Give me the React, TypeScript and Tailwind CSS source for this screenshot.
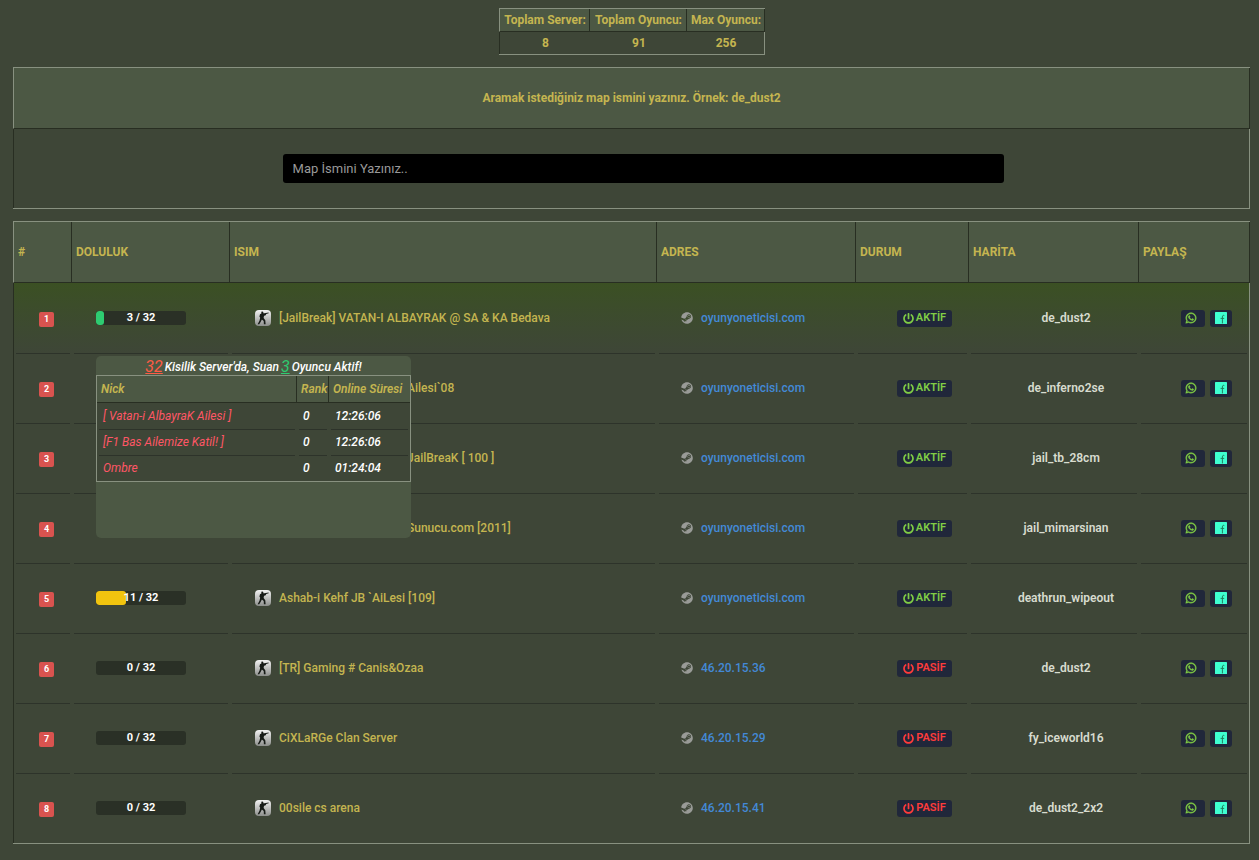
import React from 'react';
import { FaPowerOff, FaSteam, FaWhatsapp } from 'react-icons/fa';

type Server = {
  name: string;
  players?: number;
  max: number;
  address: string;
  active: boolean;
  map: string;
  indented?: boolean;
};

const servers: Server[] = [
  { name: '[JailBreak] VATAN-I ALBAYRAK @ SA & KA Bedava', players: 3, max: 32, address: 'oyunyoneticisi.com', active: true, map: 'de_dust2' },
  { name: 'Ailesi`08', indented: true, max: 32, address: 'oyunyoneticisi.com', active: true, map: 'de_inferno2se' },
  { name: 'JailBreaK [ 100 ]', indented: true, max: 32, address: 'oyunyoneticisi.com', active: true, map: 'jail_tb_28cm' },
  { name: 'Sunucu.com [2011]', indented: true, max: 32, address: 'oyunyoneticisi.com', active: true, map: 'jail_mimarsinan' },
  { name: 'Ashab-i Kehf JB `AiLesi [109]', players: 11, max: 32, address: 'oyunyoneticisi.com', active: true, map: 'deathrun_wipeout' },
  { name: '[TR] Gaming # Canis&Ozaa', players: 0, max: 32, address: '46.20.15.36', active: false, map: 'de_dust2' },
  { name: 'CiXLaRGe Clan Server', players: 0, max: 32, address: '46.20.15.29', active: false, map: 'fy_iceworld16' },
  { name: '00sile cs arena', players: 0, max: 32, address: '46.20.15.41', active: false, map: 'de_dust2_2x2' },
];

const online = [
  { nick: '[ Vatan-i AlbayraK Ailesi ]', rank: 0, time: '12:26:06' },
  { nick: '[F1 Bas Ailemize Katil! ]', rank: 0, time: '12:26:06' },
  { nick: 'Ombre', rank: 0, time: '01:24:04' },
];

const headCell =
  'border-r border-b border-[#282e22] bg-[#4c5844] font-bold text-[#c4b550] first:border-l first:border-l-[#889180]';
const bodyCell =
  'first:border-l first:border-l-[#282e22] last:border-r last:border-r-[#889180]';
const frame = 'border-y border-[#889180]';
const ruleTop =
  'bg-[linear-gradient(#2d332a,#2d332a)] bg-[length:calc(100%-4px)_1px] bg-top bg-no-repeat';

function StrikeIcon() {
  return (
    <svg viewBox="0 0 16 16" className="size-4 shrink-0" aria-hidden="true">
      <defs>
        <linearGradient id="plate" x1="0" y1="0" x2="0" y2="1">
          <stop offset="0" stopColor="#f2f2f2" />
          <stop offset="1" stopColor="#8d8f8c" />
        </linearGradient>
      </defs>
      <rect width="16" height="16" rx="4" fill="url(#plate)" />
      <path
        fill="#161a16"
        d="M6.3 1.8 7.6 1.5 8.4 2.3 8.2 3.2 9.6 3.2 13.6 2.5 13.7 3.3 11.2 4 10.8 5.2 9.8 5.4 9 6 8.6 8 10.3 10.2 10.6 14.3 8.9 14.3 8.7 11 6.9 9.4 5.6 12 4.2 14.3 2.7 14.2 4.5 10.8 5.2 7.8 4.4 6.5 5 4.2 6.4 3.4Z"
      />
    </svg>
  );
}

function FacebookIcon() {
  return (
    <svg viewBox="0 0 12 12" className="size-3" aria-hidden="true">
      <rect width="12" height="12" rx="0.6" fill="#3fffd1" />
      <path d="M9.3 3.6C8.2 3 7.4 3.5 7.4 5v6.4M5.6 6.4h3.6" fill="none" stroke="#20805f" strokeWidth="1" />
    </svg>
  );
}

function PlayerPopup() {
  return (
    <div className="absolute top-[45px] left-0 z-10 h-[182px] w-[315px] rounded-[5px] bg-[#4c5844] text-xs italic">
      <p className="flex h-[19px] items-center justify-center gap-0.5 pt-0.5 font-medium text-white">
        <u className="text-base font-normal text-[#ff5b45]">32</u> Kisilik Server'da, Suan{' '}
        <u className="text-base font-normal text-[#2ecc71]">3</u> Oyuncu Aktif!
      </p>
      <table className="w-full table-fixed border-separate border-spacing-0 border border-[#889180] bg-[#3e4637]">
        <colgroup>
          <col />
          <col className="w-8" />
          <col className="w-[81px]" />
        </colgroup>
        <thead>
          <tr className="h-[27px] text-left">
            <th className="border-r border-b border-[#282e22] bg-[#4c5844] pl-1 font-semibold">Nick</th>
            <th className="border-r border-b border-[#282e22] bg-[#4c5844] pl-1 font-semibold">Rank</th>
            <th className="border-b border-[#282e22] bg-[#4c5844] pl-1 font-semibold whitespace-nowrap">Online Süresi</th>
          </tr>
        </thead>
        <tbody>
          {online.map((p, i) => (
            <tr key={p.nick} className="h-[26px]">
              <td className={`pl-1.5 text-[#ff5666] ${i > 0 ? ruleTop : ''}`}>{p.nick}</td>
              <td className={`pl-1.5 font-medium text-white ${i > 0 ? ruleTop : ''}`}>{p.rank}</td>
              <td className={`pl-1.5 font-medium text-white ${i > 0 ? ruleTop : ''}`}>{p.time}</td>
            </tr>
          ))}
        </tbody>
      </table>
    </div>
  );
}

export default function App() {
  const total = servers.length;
  return (
    <main className="flex min-h-screen flex-col items-center gap-3 bg-[#3e4637] pt-2 pr-[9px] pb-4 pl-[13px] font-['Roboto',sans-serif] text-xs leading-4 text-[#c4b550]">
      <table className={`border-separate border-spacing-0 ${frame} text-center font-bold`}>
        <thead>
          <tr className="h-[23px]">
            <th className={`${headCell} w-[91px] pl-0.5`}>Toplam Server:</th>
            <th className={`${headCell} w-[97px] pl-0.5`}>Toplam Oyuncu:</th>
            <th className={`${headCell} w-[78px] pl-0.5`}>Max Oyuncu:</th>
          </tr>
        </thead>
        <tbody>
          <tr className="h-[22px]">
            <td className={`${bodyCell} pl-0.5`}>{total}</td>
            <td className={`${bodyCell} pl-0.5`}>91</td>
            <td className={`${bodyCell} pl-0.5`}>256</td>
          </tr>
        </tbody>
      </table>

      <section className={`w-full ${frame}`}>
        <label
          htmlFor="map"
          className="flex h-[61px] items-center justify-center border border-t-0 border-[#282e22] border-l-[#889180] bg-[#4c5844] font-bold"
        >
          Aramak istediğiniz map ismini yazınız. Örnek: de_dust2
        </label>
        <div className="flex h-[79px] items-center justify-center border-x border-l-[#282e22] border-r-[#889180] pr-1 pl-7">
          <input
            id="map"
            type="text"
            placeholder="Map İsmini Yazınız.."
            className="h-[29px] w-3/5 rounded-[3px] bg-black px-2.5 text-[13px] text-[#a0a0a0] outline-none placeholder:text-[#999]"
          />
        </div>
      </section>

      <table className={`w-full table-fixed border-separate border-spacing-0 ${frame}`}>
        <colgroup>
          <col className="w-[59px]" />
          <col className="w-[158px]" />
          <col />
          <col className="w-[199px]" />
          <col className="w-[113px]" />
          <col className="w-[170px]" />
          <col className="w-[111px]" />
        </colgroup>
        <thead>
          <tr className="h-[61px] text-left">
            {['#', 'DOLULUK', 'ISIM', 'ADRES', 'DURUM', 'HARİTA', 'PAYLAŞ'].map((h) => (
              <th key={h} className={`${headCell} pl-1`}>
                {h}
              </th>
            ))}
          </tr>
        </thead>
        <tbody>
          {servers.map((s, i) => {
            const cell = `${bodyCell} ${i > 0 ? ruleTop : ''}`;
            const players = s.players ?? 0;
            return (
              <tr key={s.name} className={`h-[70px] ${i === 0 ? 'bg-linear-to-b from-[#3b5023] to-[#3e4637]' : ''}`}>
                <td className={`${cell} pt-0.5 pl-[25px]`}>
                  <span className="flex size-[15px] items-center justify-center rounded-xs bg-[#d9534f] text-[9px] font-bold text-white">
                    {i + 1}
                  </span>
                </td>
                <td className={`${cell} pl-6`}>
                  <div className="relative h-3.5 w-[90px]">
                    <div className="relative h-full overflow-hidden rounded-[3px] bg-[#2a3026]">
                      <div
                        className={`h-full rounded-[3px] ${players > 10 ? 'bg-[#f1c40f]' : 'bg-[#2ecc71]'}`}
                        style={{ width: `${Math.floor((players / s.max) * 98)}%` }}
                      />
                      {s.players !== undefined && (
                        <span className="absolute inset-0 text-center text-[11px] leading-[14px] font-bold text-white">
                          {s.players} / {s.max}
                        </span>
                      )}
                    </div>
                    {i === 0 && <PlayerPopup />}
                  </div>
                </td>
                <td className={`${cell} pl-[25px]`}>
                  <a href="#server" className="flex items-center gap-2 font-medium whitespace-nowrap">
                    <StrikeIcon />
                    <span className={s.indented ? 'pl-32' : ''}>{s.name}</span>
                  </a>
                </td>
                <td className={`${cell} pl-6`}>
                  <a href="#connect" className="flex items-center gap-2 font-medium text-[#4389d6]">
                    <FaSteam className="size-3 text-[#999b97]" />
                    {s.address}
                  </a>
                </td>
                <td className={`${cell} pl-6`}>
                  <span
                    className={`mx-auto flex h-[17px] w-[55px] items-center justify-center gap-0.5 rounded-[3px] bg-[#20273a] text-[11px] font-semibold ${s.active ? 'text-[#80cc45]' : 'text-[#ff3b3b]'}`}
                  >
                    <FaPowerOff className="size-[11px]" />
                    {s.active ? 'AKTİF' : 'PASİF'}
                  </span>
                </td>
                <td className={`${cell} pl-6 text-center font-semibold text-[#d8dccf]`}>{s.map}</td>
                <td className={`${cell} pl-6`}>
                  <div className="flex justify-center gap-[5px]">
                    <a href="#whatsapp" aria-label="WhatsApp" className="flex h-[17px] w-6 items-center justify-center rounded-[3px] bg-[#20273a] pr-1 text-[#80cc45]">
                      <FaWhatsapp className="size-3" stroke="currentColor" strokeWidth="20" />
                    </a>
                    <a href="#facebook" aria-label="Facebook" className="flex h-[17px] w-[22px] items-center justify-center rounded-[3px] bg-[#20273a]">
                      <FacebookIcon />
                    </a>
                  </div>
                </td>
              </tr>
            );
          })}
        </tbody>
      </table>
    </main>
  );
}
